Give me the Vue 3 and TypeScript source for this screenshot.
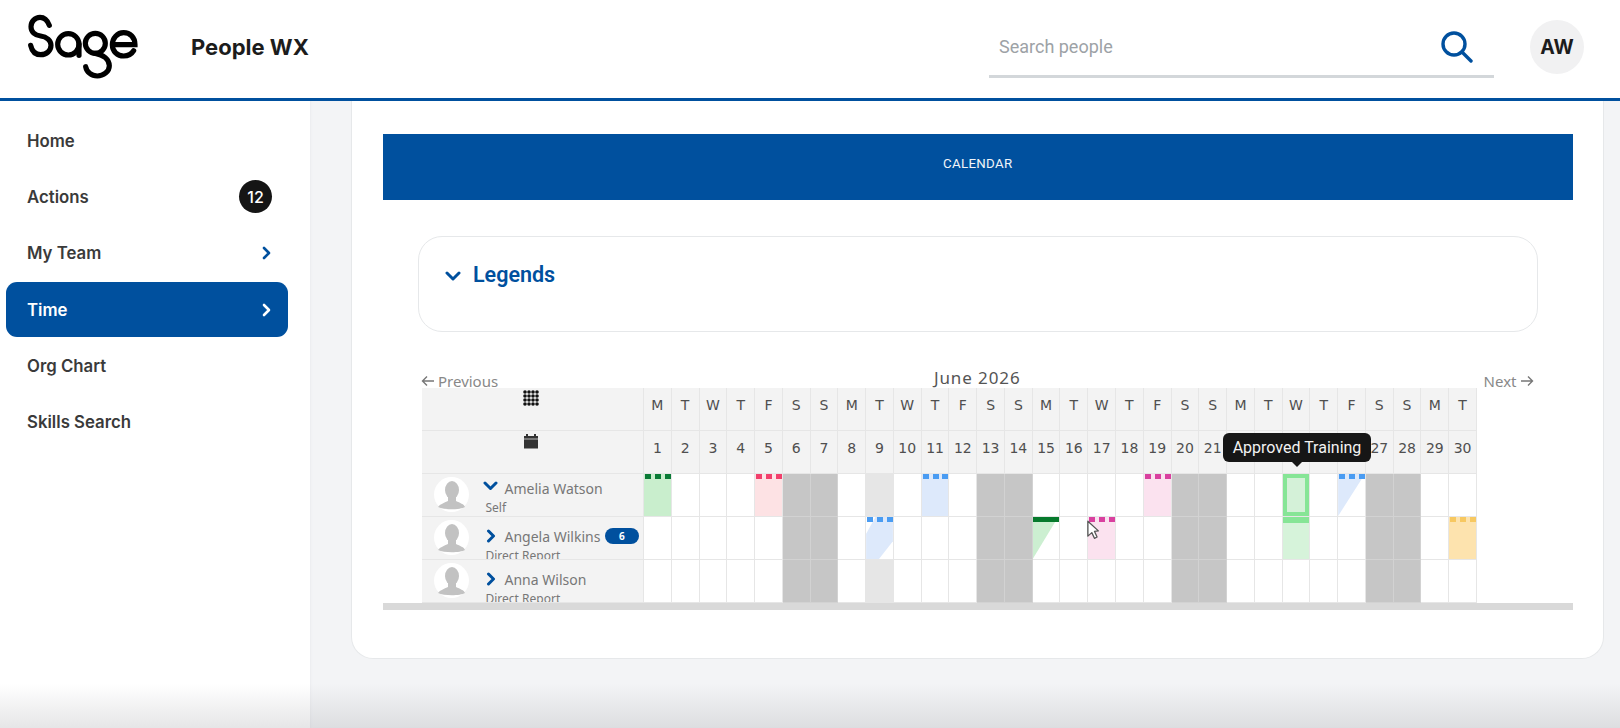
<template>
  <div class="page">
    <header class="topbar">
      <svg class="logo" viewBox="0 0 375 225" fill="none" stroke="#000" stroke-width="15.5" stroke-linecap="round" role="img" aria-label="Sage">
        <path d="M88 46C82 30 72 22 60 22C45 22 33 35 33 50C33 66 45 76 62 78C80 80 93 92 93 106C93 122 80 134 62 134C47 134 36 124 32 106" />
        <circle cx="145" cy="103" r="32" />
        <path d="M177 103V136" />
        <circle cx="226" cy="100" r="30" />
        <path d="M226 130C250 134 268 148 268 167C268 185 250 198 232 198C214 198 200 186 197 170" />
        <path d="M284 104H345C345 82 330 68 311 68C292 68 277 84 277 104C277 124 292 138 311 138C325 138 335 132 341 122" />
      </svg>
      <div class="product">People WX</div>
      <div class="search">
        <span class="search-text">Search people</span>
        <svg class="search-icon" viewBox="0 0 34 34" fill="none" stroke="#00509e" stroke-width="3.4" stroke-linecap="round">
          <circle cx="15" cy="14" r="11" />
          <path d="M23 22L32 31" />
        </svg>
      </div>
      <div class="avatar">AW</div>
    </header>

    <div class="body">
      <nav class="sidebar">
        <a v-for="item in navItems" :key="item.label" class="nav-item" :class="{ active: item.active }">
          <span>{{ item.label }}</span>
          <span v-if="item.badge" class="nav-badge">{{ item.badge }}</span>
          <svg v-if="item.arrow" class="nav-arrow" viewBox="0 0 10 14" fill="none" stroke="currentColor" stroke-width="2.6" stroke-linecap="round" stroke-linejoin="round">
            <path d="M3 2L8 7L3 12" />
          </svg>
        </a>
      </nav>

      <main class="main">
        <section class="card">
          <div class="banner">CALENDAR</div>

          <div class="legends">
            <svg class="legends-chevron" viewBox="0 0 16 10" fill="none" stroke="#00509e" stroke-width="3" stroke-linecap="round" stroke-linejoin="round">
              <path d="M2 2L8 8L14 2" />
            </svg>
            <span>Legends</span>
          </div>

          <div class="calendar">
            <div class="month-nav">
              <span class="month-link">
                <svg class="nav-head" viewBox="0 0 14 12" fill="none" stroke="#777" stroke-width="1.4"><path d="M13 6H1.5M6 1.5L1.5 6L6 10.5" /></svg>
                Previous
              </span>
              <span class="month-title">June 2026</span>
              <span class="month-link next">
                Next
                <svg class="nav-head" viewBox="0 0 14 12" fill="none" stroke="#777" stroke-width="1.4"><path d="M1 6H12.5M8 1.5L12.5 6L8 10.5" /></svg>
              </span>
            </div>

            <div class="grid-wrap">
              <div class="cal-grid">
                <div class="head-label">
                  <svg class="head-icon" viewBox="0 0 16 16" fill="#111">
                    <template v-for="y in 4" :key="y">
                      <circle v-for="x in 4" :key="x" :cx="x * 4 - 2" :cy="y * 4 - 2" r="1.8" />
                    </template>
                  </svg>
                </div>
                <div v-for="(d, i) in days" :key="'w' + i" class="head-cell">{{ d.letter }}</div>

                <div class="head-label">
                  <svg class="head-icon" viewBox="0 0 16 16">
                    <path fill="#333" d="M1 3H15V15.5H1Z" />
                    <path fill="#333" d="M3 1H5V4H3ZM11 1H13V4H11Z" />
                    <path stroke="#ddd" stroke-width="0.8" d="M1 6H15" />
                  </svg>
                </div>
                <div v-for="d in days" :key="'d' + d.num" class="head-cell">{{ d.num }}</div>

                <template v-for="(person, r) in people" :key="person.name">
                  <div class="person">
                    <svg class="person-pic" viewBox="0 0 35 35">
                      <circle cx="17.5" cy="17.5" r="17.5" fill="#fff" />
                      <ellipse cx="18" cy="13" rx="7" ry="9" fill="#c2c2c2" />
                      <path fill="#c2c2c2" d="M14 20H22V24C26 26 30 27 31 30C26 33 10 33 4 30C6 27 10 26 14 24Z" />
                    </svg>
                    <div class="person-text" :class="{ closed: !person.open }">
                      <div class="person-name">
                        <svg v-if="person.open" class="chev-down" viewBox="0 0 15 10" fill="none" stroke="#00509e" stroke-width="3" stroke-linecap="round" stroke-linejoin="round">
                          <path d="M2 2L7.5 7.5L13 2" />
                        </svg>
                        <svg v-else class="chev-right" viewBox="0 0 10 14" fill="none" stroke="#00509e" stroke-width="3" stroke-linecap="round" stroke-linejoin="round">
                          <path d="M2.5 2L7.5 7L2.5 12" />
                        </svg>
                        <span>{{ person.name }}</span>
                        <span v-if="person.count" class="count">{{ person.count }}</span>
                      </div>
                      <div class="person-role">{{ person.role }}</div>
                    </div>
                  </div>
                  <div v-for="d in days" :key="d.num" class="day" :class="dayClass(r, d.num)">
                    <i v-if="cellFor(r, d.num)" class="fill" />
                    <i v-if="hasDots(r, d.num)" class="dots"><b /><b /><b /></i>
                  </div>
                </template>
              </div>

              <div class="tooltip">Approved Training</div>

              <svg class="cursor" viewBox="0 0 16 22">
                <path d="M1 1L13 12L8.5 12.5L11.5 19L8.5 20.5L5.5 14L1 18Z" fill="#fff" stroke="#555" stroke-width="1.5" stroke-linejoin="round" />
              </svg>
            </div>

            <div class="scrollbar" />
          </div>
        </section>
      </main>
    </div>

    <div class="fade" />
  </div>
</template>

<script setup lang="ts">
const navItems = [
  { label: 'Home' },
  { label: 'Actions', badge: 12 },
  { label: 'My Team', arrow: true },
  { label: 'Time', arrow: true, active: true },
  { label: 'Org Chart' },
  { label: 'Skills Search' },
];

const letters = ['M', 'T', 'W', 'T', 'F', 'S', 'S'];
const days = Array.from({ length: 30 }, (_, i) => ({ num: i + 1, letter: letters[i % 7] }));

const people = [
  { name: 'Amelia Watson', role: 'Self', open: true, count: 0 },
  { name: 'Angela Wilkins', role: 'Direct Report', open: false, count: 6 },
  { name: 'Anna Wilson', role: 'Direct Report', open: false, count: 0 },
];

// row -> day -> leave type
const cells: Record<number, Record<number, string>> = {
  0: { 1: 'green', 5: 'red', 9: 'off', 11: 'blue', 19: 'pink', 24: 'hover', 26: 'blue half' },
  1: { 9: 'blue band', 15: 'solid half', 17: 'pink', 24: 'train', 30: 'amber' },
  2: { 9: 'off' },
};

function cellFor(row: number, day: number): string | undefined {
  return cells[row]?.[day];
}

function hasDots(row: number, day: number): boolean {
  const type = cellFor(row, day);
  return !!type && !['off', 'hover', 'train', 'solid half'].includes(type);
}

function dayClass(row: number, day: number): string {
  const weekend = day % 7 === 6 || day % 7 === 0;
  return [weekend ? 'weekend' : '', cellFor(row, day) ?? ''].join(' ');
}
</script>

<style>
html,
body {
  margin: 0;
  background: #fff;
}
</style>

<style scoped>
.page {
  position: relative;
  display: flex;
  flex-direction: column;
  width: 1620px;
  height: 728px;
  overflow: hidden;
  font-family: Inter, "Liberation Sans", sans-serif;
}

.topbar {
  display: flex;
  align-items: center;
  flex: none;
  height: 98px;
  box-sizing: content-box;
  border-bottom: 3px solid #00509e;
  background: #fff;
}

.logo {
  align-self: flex-start;
  width: 125px;
  height: 75px;
  margin: 10px 0 0 20px;
  flex: none;
}

.product {
  margin: 0 0 4px 46px;
  font-size: 22px;
  font-weight: 700;
  color: #1c1c1c;
}

.search {
  display: flex;
  align-items: center;
  justify-content: space-between;
  align-self: flex-start;
  width: 505px;
  height: 67px;
  box-sizing: border-box;
  margin: 11px 0 0 auto;
  padding: 7px 3px 0 10px;
  border-bottom: 3px solid #d3d7da;
}

.search-text {
  margin-bottom: 1px;
  font-family: Roboto, sans-serif;
  font-size: 18px;
  color: #9da2a6;
}

.search-icon {
  width: 34px;
  height: 34px;
  margin-right: 18px;
}

.avatar {
  display: flex;
  align-items: center;
  justify-content: center;
  width: 54px;
  height: 54px;
  margin: 0 36px 4px 36px;
  border-radius: 50%;
  background: #f1f1f2;
  font-size: 19.5px;
  font-weight: 700;
  color: #1c1c1c;
}

.body {
  display: flex;
  flex: 1;
  min-height: 0;
}

.sidebar {
  display: flex;
  flex-direction: column;
  flex: none;
  width: 310px;
  box-sizing: border-box;
  padding: 12px 22px 0 6px;
  background: #fff;
}

.nav-item {
  display: flex;
  align-items: center;
  justify-content: space-between;
  height: 55px;
  margin-bottom: 1.4px;
  padding: 0 17px 0 21px;
  border-radius: 11px;
  font-size: 16.8px;
  font-weight: 600;
  color: #3a3a3a;
}

.nav-item.active {
  background: #00509e;
  color: #fff;
}

.nav-badge {
  display: flex;
  align-items: center;
  justify-content: center;
  width: 33px;
  height: 33px;
  margin-right: -1px;
  border-radius: 50%;
  background: #151515;
  font-size: 16px;
  font-weight: 500;
  color: #fff;
}

.nav-arrow {
  width: 10px;
  height: 14px;
  color: #00509e;
}

.active .nav-arrow {
  color: #fff;
}

.main {
  flex: 1;
  min-width: 0;
  padding: 0 16px 0 41px;
  background: #f3f4f6;
  box-shadow: inset 2px 0 2px -1px #ebedef;
}

.card {
  height: 558px;
  box-sizing: border-box;
  padding: 33px 30.5px 0 31px;
  border: 1px solid #e6e8ea;
  border-top: 0;
  border-radius: 0 0 22px 22px;
  background: #fff;
}

.banner {
  display: flex;
  align-items: center;
  justify-content: center;
  height: 66px;
  box-sizing: border-box;
  padding-bottom: 7px;
  background: #00509e;
  font-family: Roboto, sans-serif;
  font-size: 13.3px;
  letter-spacing: 0.3px;
  color: #f2f5f9;
}

.legends {
  display: flex;
  align-items: flex-start;
  gap: 12px;
  height: 96px;
  box-sizing: border-box;
  margin: 36px 35px 0;
  padding: 25px 26px 0;
  border: 1.5px solid #e6e8ea;
  border-radius: 24px;
  font-family: Roboto, sans-serif;
  font-size: 21.5px;
  font-weight: 600;
  color: #00509e;
}

.legends-chevron {
  width: 16px;
  height: 10px;
  margin-top: 9px;
}

.calendar {
  margin-top: 35.5px;
}

.month-nav {
  display: grid;
  grid-template-columns: 1fr auto 1fr;
  align-items: end;
  height: 20px;
  margin: 0 39px 0 38px;
  font-family: "Noto Sans", sans-serif;
  font-size: 15px;
  line-height: 20px;
  color: #888;
}

.month-link {
  display: flex;
  align-items: center;
  gap: 3px;
  margin-bottom: 2px;
}

.month-link.next {
  justify-content: flex-end;
}

.nav-head {
  width: 14px;
  height: 12px;
}

.month-title {
  margin-bottom: 5px;
  font-size: 17px;
  letter-spacing: 0.9px;
  color: #555;
}

.grid-wrap {
  position: relative;
  margin-left: 39px;
  width: 1150px;
  height: 215.5px;
  overflow: hidden;
}

.cal-grid {
  display: grid;
  grid-template-columns: 222px repeat(30, 27.77px);
  grid-template-rows: 43.5px 43px 43px 43px 43px;
  font-family: "DejaVu Sans", sans-serif;
}

.head-label,
.head-cell,
.person,
.day {
  box-sizing: border-box;
  border-right: 1.5px solid #e6e6e6;
  border-bottom: 1.5px solid #e6e6e6;
}

.head-label {
  display: flex;
  justify-content: center;
  padding-top: 2px;
  background: #f3f3f3;
}

.head-icon {
  width: 16px;
  height: 16px;
  margin-left: -3px;
}

.head-cell {
  display: flex;
  align-items: center;
  justify-content: center;
  padding-bottom: 8px;
  background: #f3f3f3;
  font-size: 14px;
  color: #4f4f4f;
}

.person {
  display: flex;
  overflow: hidden;
  padding: 3px 0 0 11.5px;
  background: #f3f3f3;
}

.person-pic {
  flex: none;
  width: 35px;
  height: 35px;
}

.person-text {
  min-width: 0;
  margin-left: 17px;
}

.person-text.closed {
  padding-top: 5px;
}

.person-name {
  display: flex;
  align-items: center;
  height: 22px;
  font-family: "Noto Sans", sans-serif;
  font-size: 14px;
  white-space: nowrap;
  color: #777;
}

.chev-down {
  width: 15px;
  height: 10px;
  margin: -4px 7px 0 -3px;
}

.chev-right {
  width: 10px;
  height: 14px;
  margin-right: 9px;
}

.count {
  display: flex;
  align-items: center;
  justify-content: center;
  width: 34px;
  height: 16px;
  margin-left: 4.5px;
  border-radius: 8px;
  background: #00509e;
  font-size: 10px;
  font-weight: 700;
  color: #fff;
}

.person-role {
  margin-top: 2px;
  font-family: "Noto Sans", sans-serif;
  font-size: 12px;
  line-height: 14px;
  color: #777;
}

.day {
  position: relative;
  background: #fff;
}

.day.weekend {
  background: #c6c6c6;
  border-color: #d2d2d2;
}

.day.off {
  background: #e6e6e6;
}

.fill {
  position: absolute;
  inset: 0;
}

.dots {
  position: absolute;
  top: 0;
  left: 0;
  right: 0;
  display: flex;
  justify-content: space-between;
  padding: 0 0 0 1px;
}

.dots b {
  width: 6px;
  height: 5px;
  background: var(--dot);
}

.green { --dot: #0a7a36; }
.green .fill { background: #c9eecd; }
.red { --dot: #f23f6c; }
.red .fill { background: #fde2e4; }
.blue { --dot: #4a9cf2; }
.blue .fill { background: #dde9fb; }
.pink { --dot: #d9409f; }
.pink .fill { background: #fbe2ef; }
.amber { --dot: #f7c860; }
.amber .fill { background: #fde3ae; }

.half .fill {
  clip-path: polygon(0 0, 100% 0, 0 100%);
}

.band .fill {
  clip-path: polygon(0 40%, 35% 0, 100% 0, 100% 58%, 48% 100%, 0 100%);
}

.solid::before {
  content: "";
  position: absolute;
  z-index: 1;
  top: 0;
  left: 0;
  right: 0;
  height: 5px;
  background: #067a2c;
}

.solid .fill {
  background: #ccefd1;
  clip-path: polygon(0 0, 95% 0, 0 100%);
}

.hover .fill {
  background: #d4f1d8;
  border: 4px solid #86e596;
}

.train .fill {
  background: #d6f3da;
  border-top: 6px solid #86e596;
}

.tooltip {
  position: absolute;
  top: 45px;
  left: 801px;
  display: flex;
  align-items: center;
  justify-content: center;
  width: 148px;
  height: 29px;
  border-radius: 6px;
  background: #161616;
  font-family: Roboto, sans-serif;
  font-size: 16px;
  color: #f2f2f2;
}

.tooltip::after {
  content: "";
  position: absolute;
  top: 100%;
  left: 50%;
  margin-left: -5px;
  border: 5px solid transparent;
  border-top-color: #161616;
  border-bottom: 0;
}

.cursor {
  position: absolute;
  top: 132px;
  left: 665px;
  width: 14px;
  height: 20px;
}

.scrollbar {
  height: 7px;
  background: #d9d9d9;
}

.fade {
  position: absolute;
  left: 0;
  right: 0;
  bottom: 0;
  height: 44px;
  background: linear-gradient(rgba(150, 150, 155, 0), rgba(150, 150, 155, 0.24));
  pointer-events: none;
}
</style>
